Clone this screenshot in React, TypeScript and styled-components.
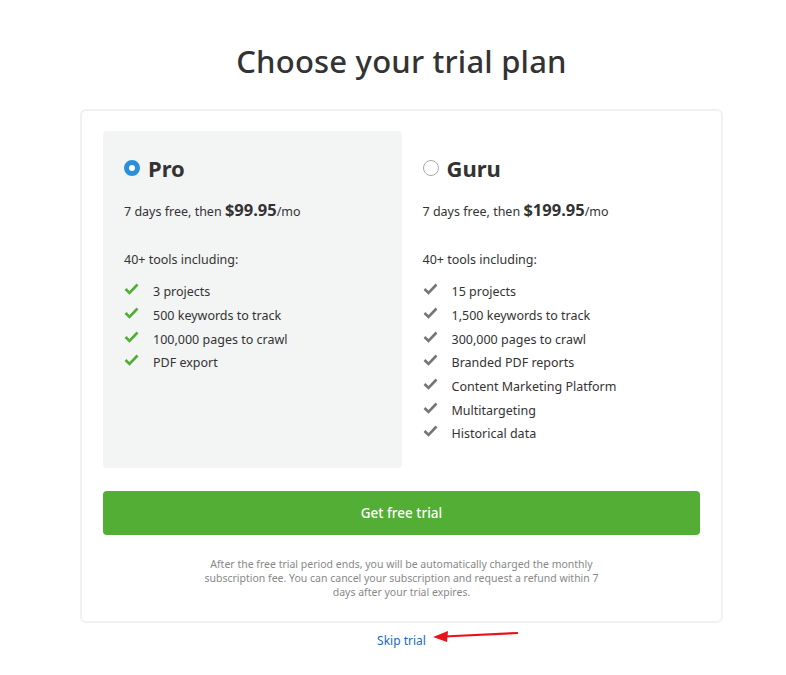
import { FC } from 'react';
import styled, { createGlobalStyle } from 'styled-components';

const GlobalStyle = createGlobalStyle`
  body {
    margin: 0;
    background: #fff;
    font-family: 'Noto Sans', 'Open Sans', sans-serif;
    color: #333;
  }
`;

type Plan = {
  name: string;
  price: string;
  features: string[];
  selected?: boolean;
};

const plans: Plan[] = [
  {
    name: 'Pro',
    price: '$99.95',
    selected: true,
    features: ['3 projects', '500 keywords to track', '100,000 pages to crawl', 'PDF export'],
  },
  {
    name: 'Guru',
    price: '$199.95',
    features: [
      '15 projects',
      '1,500 keywords to track',
      '300,000 pages to crawl',
      'Branded PDF reports',
      'Content Marketing Platform',
      'Multitargeting',
      'Historical data',
    ],
  },
];

const Check: FC<{ color: string }> = ({ color }) => (
  <svg width="15" height="12" viewBox="0 0 15 12">
    <path d="M1.5 6 L5.5 10 L13.5 1.5" fill="none" stroke={color} strokeWidth="2.6" />
  </svg>
);

const Arrow = () => (
  <svg width="90" height="14" viewBox="0 0 90 14">
    <path d="M12 7.5 L86 4" stroke="#e8141b" strokeWidth="2.2" fill="none" />
    <path d="M1 8 L16 2 L15 13 Z" fill="#e8141b" />
  </svg>
);

export default function App() {
  return (
    <Page>
      <GlobalStyle />
      <Title>Choose your trial plan</Title>
      <Card>
        <Plans>
          {plans.map((p) => (
            <PlanCol key={p.name} $active={p.selected}>
              <PlanHead>
                <Radio $checked={p.selected} />
                <PlanName>{p.name}</PlanName>
              </PlanHead>
              <Price>
                7 days free, then <strong>{p.price}</strong>/mo
              </Price>
              <ToolsLabel>40+ tools including:</ToolsLabel>
              <Features>
                {p.features.map((f) => (
                  <Feature key={f}>
                    <Check color={p.selected ? '#4fae33' : '#757575'} />
                    <span>{f}</span>
                  </Feature>
                ))}
              </Features>
            </PlanCol>
          ))}
        </Plans>
        <TrialButton>Get free trial</TrialButton>
        <Note>
          After the free trial period ends, you will be automatically charged the monthly subscription fee. You can
          cancel your subscription and request a refund within 7 days after your trial expires.
        </Note>
      </Card>
      <SkipRow>
        <SkipLink href="#">Skip trial</SkipLink>
        <ArrowMark>
          <Arrow />
        </ArrowMark>
      </SkipRow>
    </Page>
  );
}

const Page = styled.div`
  width: 643px;
  margin: 0 auto;
  padding: 40px 0 20px 17px;
  display: flex;
  flex-direction: column;
  align-items: center;
`;

const Title = styled.h1`
  margin: 0 0 27px;
  font-size: 31px;
  font-weight: 500;
  line-height: 42px;
  color: #333;
  letter-spacing: 0.2px;
`;

const Card = styled.div`
  box-sizing: border-box;
  width: 643px;
  border: 2px solid #f1f1f1;
  border-radius: 6px;
  padding: 20px 21px 22px;
`;

const Plans = styled.div`
  display: grid;
  grid-template-columns: 1fr 1fr;
`;

const PlanCol = styled.div<{ $active?: boolean }>`
  background: ${(p) => (p.$active ? '#f3f4f4' : 'transparent')};
  border-radius: 4px;
  padding: 26px 21px 22px;
`;

const PlanHead = styled.div`
  display: flex;
  align-items: center;
  gap: 8px;
  height: 22px;
`;

const Radio = styled.span<{ $checked?: boolean }>`
  box-sizing: border-box;
  width: 16px;
  height: 16px;
  border-radius: 50%;
  background: #fff;
  border: ${(p) => (p.$checked ? '5px solid #2b8fdc' : '1px solid #a9a9a9')};
`;

const PlanName = styled.span`
  font-size: 22px;
  font-weight: 700;
  color: #333;
`;

const Price = styled.div`
  margin-top: 20px;
  font-size: 12.5px;
  line-height: 22px;
  color: #333;
  strong {
    font-size: 16.5px;
    font-weight: 700;
  }
`;

const ToolsLabel = styled.div`
  margin-top: 28px;
  font-size: 12.5px;
  line-height: 18px;
`;

const Features = styled.ul`
  list-style: none;
  margin: 11px 0 0;
  padding: 0;
`;

const Feature = styled.li`
  display: flex;
  align-items: center;
  gap: 14px;
  height: 23.7px;
  font-size: 12.5px;
  color: #333;
  svg {
    margin-top: -5px;
  }
`;

const TrialButton = styled.button`
  display: block;
  width: 100%;
  height: 44px;
  margin-top: 23px;
  border: none;
  border-radius: 4px;
  background: #52ae35;
  color: #fff;
  font-family: inherit;
  font-size: 13.5px;
  font-weight: 500;
  cursor: pointer;
`;

const Note = styled.p`
  margin: 22px auto 0;
  max-width: 400px;
  font-size: 10.5px;
  line-height: 14px;
  color: #888;
  text-align: center;
`;

const SkipRow = styled.div`
  position: relative;
  margin-top: 5px;
`;

const SkipLink = styled.a`
  font-size: 12px;
  color: #1a6bbb;
  text-decoration: none;
`;

const ArrowMark = styled.span`
  position: absolute;
  left: 55px;
  top: -2px;
`;
